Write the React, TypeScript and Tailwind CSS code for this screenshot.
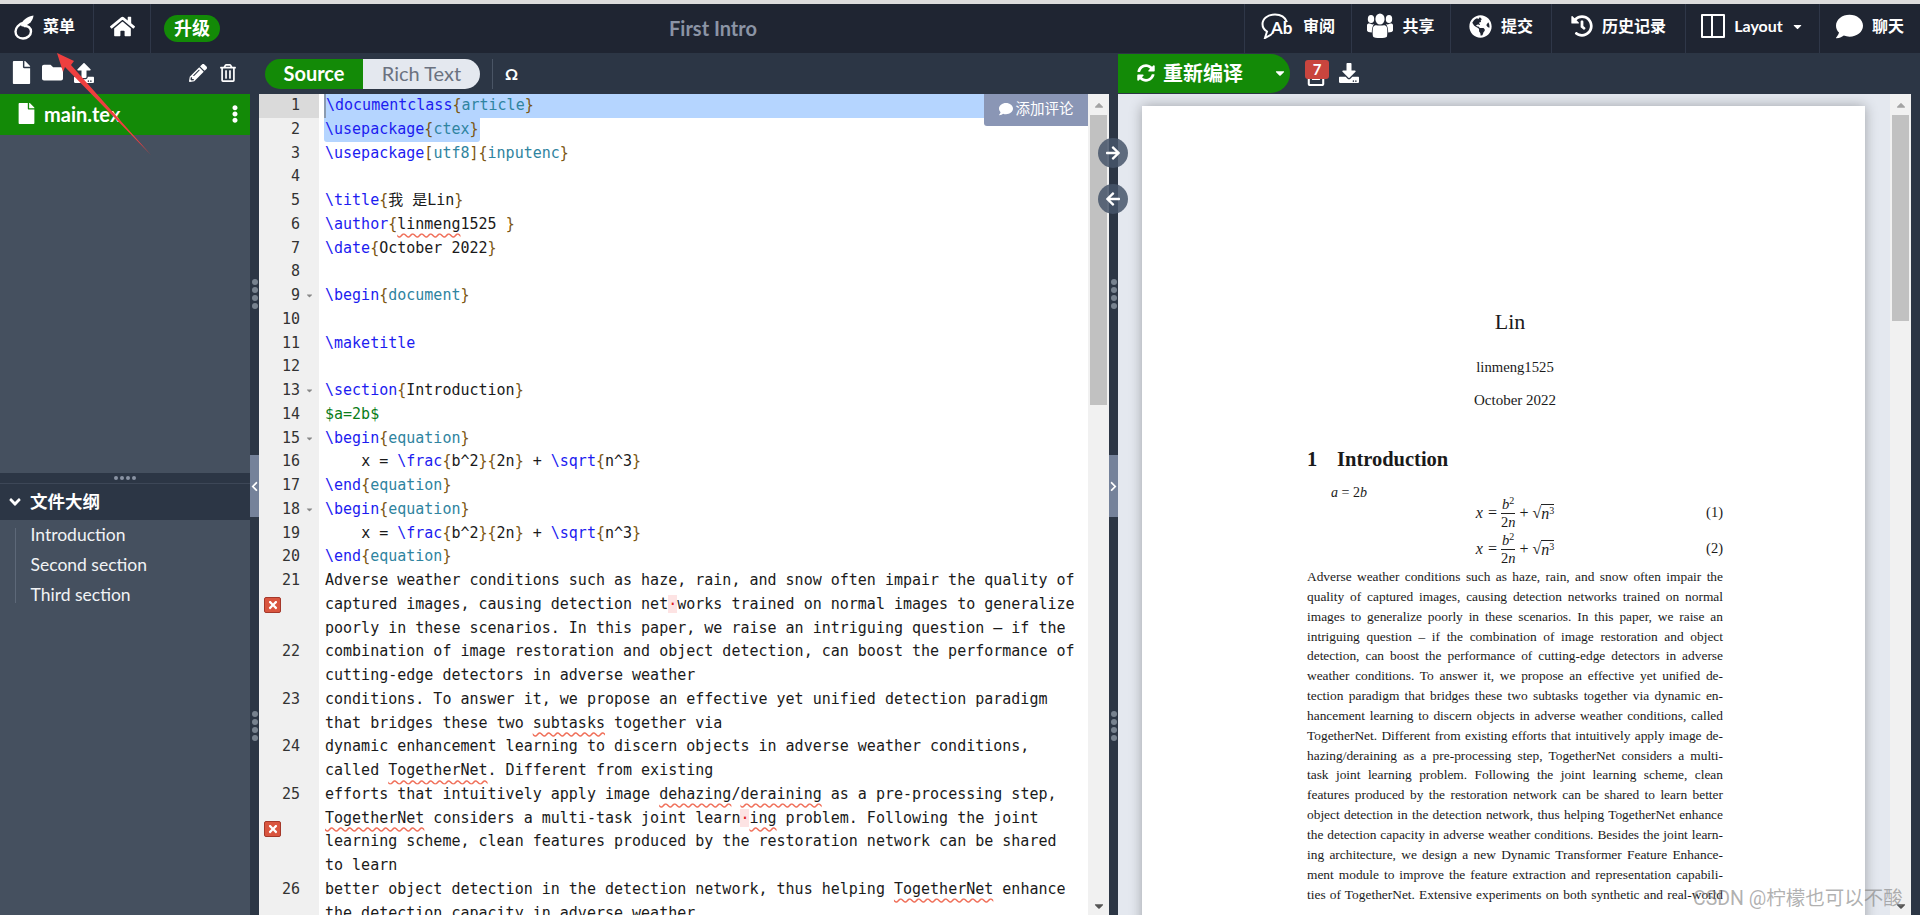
import React from "react";
import {
  FaFile,
  FaFolder,
  FaUpload,
  FaPencilAlt,
  FaRegTrashAlt,
  FaHome,
  FaEllipsisV,
  FaAngleDown,
  FaChevronLeft,
  FaChevronRight,
  FaGlobeAmericas,
  FaHistory,
  FaComment,
  FaCaretDown,
  FaCaretUp,
  FaSyncAlt,
  FaRegFileAlt,
  FaDownload,
  FaArrowRight,
  FaArrowLeft,
  FaTimes,
} from "react-icons/fa";

const Logo = () => (
  <svg width="20" height="25" viewBox="0 0 20 25" className="mb-[3px] text-white">
    <path d="M10.5 7.5C4.5 9 1.5 13 1.5 16.5c0 4.5 3.5 7 7.5 7s8-3 8-7c0-3.5-3-6-6.5-5.5" fill="none" stroke="currentColor" strokeWidth="2.4" strokeLinecap="round" />
    <path d="M7 11C8 5 13 1.5 19.5 0.5 19 5 16 10 8.5 11.5Z" fill="currentColor" />
  </svg>
);

const ReviewIcon = () => (
  <svg width="33" height="26" viewBox="0 0 33 26" className="text-white">
    <path d="M26 9C24 4 20 1.5 14 1.5 7 1.5 1.5 5.5 1.5 11c0 3.500 2 6 4.500 7.500L4 25l7-4" fill="none" stroke="currentColor" strokeWidth="2" />
    <text x="10" y="21" fontSize="17" fontWeight="700" fill="currentColor" fontFamily="Lato">Ab</text>
  </svg>
);

const UsersIcon = () => (
  <svg width="26" height="26" viewBox="0 0 26 26" fill="white">
    <ellipse cx="13" cy="6" rx="4.600" ry="5.500" />
    <ellipse cx="4" cy="6" rx="3.200" ry="4" />
    <ellipse cx="22" cy="6" rx="3.200" ry="4" />
    <path d="M6.500 13.500C8 11.500 10 12.500 13 12.500s5-1 6.500 1c1 1.500 1 7 .5 10-1 2-13 2-14 0-.5-3-.5-8.500.5-10Z" />
    <path d="M0 12.500C0 10.500 2 10 4 11c1 .5 2 .5 3 0-1.500 2-2.200 5-2.200 8.500-2.500 0-4.800-1-4.800-2Z" />
    <path d="M26 12.500C26 10.500 24 10 22 11c-1 .5-2 .5-3 0 1.500 2 2.200 5 2.200 8.500 2.500 0 4.800-1 4.800-2Z" />
  </svg>
);

const LayoutIcon = () => (
  <div className="flex h-[24px] w-[24px] rounded-[1px] border-2 border-white">
    <div className="w-1/2 border-r-2 border-white" />
  </div>
);

const NavItem = ({ width, icon, label }: { width: string; icon: React.ReactNode; label: React.ReactNode }) => (
  <div className={`flex h-full items-center justify-center gap-[9px] border-l border-[#2f3748] pb-[5px] text-[16px] font-bold text-white ${width}`}>
    {icon}
    {label}
  </div>
);

const TopBar = () => (
  <div className="flex h-[49px] shrink-0 items-center bg-[#1f2532]">
    <div className="flex h-full w-[93px] items-center gap-[9px] pl-[14px] text-[16px] font-bold text-white">
      <Logo />
      <span className="mb-[6px]">菜单</span>
    </div>
    <div className="flex h-full w-[58px] items-center justify-center border-l border-r border-[#2f3748] pb-[5px] text-white">
      <FaHome size={25} />
    </div>
    <div className="ml-[13px] flex h-[27px] w-[56px] items-center justify-center rounded-full bg-[#138a07] text-[18px] font-bold text-white">
      升级
    </div>
    <div className="flex-1 pb-[2px] pr-[38px] text-center text-[20px] font-bold text-[#8b94a5]">First Intro</div>
    <NavItem width="w-[107px]" icon={<ReviewIcon />} label="审阅" />
    <NavItem width="w-[99px]" icon={<UsersIcon />} label="共享" />
    <NavItem width="w-[101px]" icon={<FaGlobeAmericas size={23} />} label="提交" />
    <NavItem width="w-[134px]" icon={<FaHistory size={22} />} label="历史记录" />
    <NavItem
      width="w-[134px]"
      icon={<LayoutIcon />}
      label={
        <span className="flex items-center gap-[8px]">
          Layout
          <FaCaretDown size={13} />
        </span>
      }
    />
    <NavItem width="w-[101px]" icon={<FaComment size={27} />} label="聊天" />
  </div>
);

const Sidebar = () => (
  <div className="flex w-[250px] shrink-0 flex-col bg-[#45505f]">
    <div className="flex h-[41px] shrink-0 items-center bg-[#2c3645] pb-[2px] pl-[10px] text-white">
      <FaFile size={23} />
      <FaFolder size={21} className="ml-[9px]" />
      <FaUpload size={20} className="ml-[11px]" />
      <FaPencilAlt size={18} className="ml-[95px]" />
      <FaRegTrashAlt size={18} className="ml-[12px]" />
    </div>
    <div className="flex h-[41px] shrink-0 items-center bg-[#138a07] pb-[2px] pl-[16px] text-[20px] font-bold text-white">
      <FaFile size={21} />
      <span className="ml-[7px] flex-1">main.tex</span>
      <FaEllipsisV size={18} className="mr-[6px]" />
    </div>
    <div className="h-[338px] shrink-0" />
    <div className="flex h-[10px] shrink-0 items-center justify-center gap-[2px] bg-[#2c3645]">
      {[0, 1, 2, 3].map((i) => (
        <div key={i} className="h-[4px] w-[4px] rounded-full bg-[#8a93a3]" />
      ))}
    </div>
    <div className="flex h-[37px] shrink-0 items-center border-t border-[#3d4757] bg-[#2c3645] pl-[6px] text-[17.500px] font-bold text-white">
      <FaAngleDown size={18} />
      <span className="ml-[6px]">文件大纲</span>
    </div>
    <div className="flex pl-[15px]">
      <div className="mt-[8px] h-[75px] w-px bg-[#5d6878]" />
      <div className="pl-[14.500px] text-[17.500px] leading-[30px] text-[#f1f3f5]">
        <div>Introduction</div>
        <div>Second section</div>
        <div>Third section</div>
      </div>
    </div>
  </div>
);

const Dots = () => (
  <div className="flex flex-col items-center gap-[2px]">
    {[0, 1, 2, 3].map((i) => (
      <div key={i} className="h-[6px] w-[6px] rounded-full bg-[#77828f]" />
    ))}
  </div>
);

const Gutter = ({ right }: { right?: boolean }) => (
  <div className="flex w-[9px] shrink-0 flex-col bg-[#2c3645]">
    <div className="mt-[185px]">
      <Dots />
    </div>
    <div className="mt-[146px] flex h-[62px] items-center justify-center bg-[#75829a] text-white">
      {right ? <FaChevronRight size={11} /> : <FaChevronLeft size={11} />}
    </div>
    <div className="mt-[194px]">
      <Dots />
    </div>
  </div>
);

const EditorToolbar = () => (
  <div className="flex h-[41px] shrink-0 items-center bg-[#2c3645] pl-[15px]">
    <div className="flex h-[30px] w-[98px] items-center justify-center rounded-l-full bg-[#138a07] pb-[2px] text-[20px] font-bold text-white">
      Source
    </div>
    <div className="flex h-[30px] w-[117px] items-center justify-center rounded-r-full bg-[#e4e8ef] pb-[2px] text-[20px] text-[#6b7280]">
      Rich Text
    </div>
    <div className="ml-[12px] h-[30px] border-l border-[#4a5565]" />
    <div className="ml-[12px] text-[16px] font-bold text-white">Ω</div>
  </div>
);

const C = ({ children }: { children: React.ReactNode }) => <span className="text-[#1c1cf0]">{children}</span>;
const A = ({ children }: { children: React.ReactNode }) => <span className="text-[#2f84a0]">{children}</span>;
const B = ({ children }: { children: React.ReactNode }) => <span className="text-[#7a5510]">{children}</span>;
const Sp = ({ children }: { children: React.ReactNode }) => (
  <span className="underline decoration-[#f0705a] decoration-wavy underline-offset-[4px]">{children}</span>
);
const Bad = () => <span className="bg-[#fde3e3] text-[#e02020]">·</span>;

const Cmd = ({ c, a }: { c: string; a: string }) => (
  <>
    <C>\{c}</C>
    <B>{"{"}</B>
    <A>{a}</A>
    <B>{"}"}</B>
  </>
);

const Frac = () => (
  <>
    {"    x = "}
    <C>\frac</C>
    <B>{"{"}</B>b^2<B>{"}{"}</B>2n<B>{"}"}</B> + <C>\sqrt</C>
    <B>{"{"}</B>n^3<B>{"}"}</B>
  </>
);

type Line = { code?: React.ReactNode; fold?: boolean; error?: number };

const lines: Line[] = [
  {},
  {},
  {
    code: (
      <>
        <C>\usepackage</C>
        <B>[</B>
        <A>utf8</A>
        <B>]{"{"}</B>
        <A>inputenc</A>
        <B>{"}"}</B>
      </>
    ),
  },
  {},
  {
    code: (
      <>
        <C>\title</C>
        <B>{"{"}</B>我 是Lin<B>{"}"}</B>
      </>
    ),
  },
  {
    code: (
      <>
        <C>\author</C>
        <B>{"{"}</B>
        <Sp>linmeng</Sp>1525 <B>{"}"}</B>
      </>
    ),
  },
  {
    code: (
      <>
        <C>\date</C>
        <B>{"{"}</B>October 2022<B>{"}"}</B>
      </>
    ),
  },
  {},
  { code: <Cmd c="begin" a="document" />, fold: true },
  {},
  { code: <C>\maketitle</C> },
  {},
  {
    code: (
      <>
        <C>\section</C>
        <B>{"{"}</B>Introduction<B>{"}"}</B>
      </>
    ),
    fold: true,
  },
  { code: <span className="text-[#0b7d1a]">$a=2b$</span> },
  { code: <Cmd c="begin" a="equation" />, fold: true },
  { code: <Frac /> },
  { code: <Cmd c="end" a="equation" /> },
  { code: <Cmd c="begin" a="equation" />, fold: true },
  { code: <Frac /> },
  { code: <Cmd c="end" a="equation" /> },
  {
    error: 1,
    code: (
      <>
        Adverse weather conditions such as haze, rain, and snow often impair the quality of captured images, causing
        detection net
        <Bad />
        works trained on normal images to generalize poorly in these scenarios. In this paper, we raise an intriguing
        question – if the
      </>
    ),
  },
  { code: "combination of image restoration and object detection, can boost the performance of cutting-edge detectors in adverse weather" },
  {
    code: (
      <>
        conditions. To answer it, we propose an effective yet unified detection paradigm that bridges these two <Sp>subtasks</Sp> together via
      </>
    ),
  },
  {
    code: (
      <>
        dynamic enhancement learning to discern objects in adverse weather conditions, called <Sp>TogetherNet</Sp>. Different from existing
      </>
    ),
  },
  {
    error: 2,
    code: (
      <>
        efforts that intuitively apply image <Sp>dehazing</Sp>/<Sp>deraining</Sp> as a pre-processing step, <Sp>TogetherNet</Sp> considers a multi-task joint learn
        <Bad />
        <Sp>ing</Sp> problem. Following the joint learning scheme, clean features produced by the restoration network can be shared to learn
      </>
    ),
  },
  {
    code: (
      <>
        better object detection in the detection network, thus helping <Sp>TogetherNet</Sp> enhance the detection capacity in adverse weather
      </>
    ),
  },
];

const ErrorMark = ({ top }: { top: string }) => (
  <div className={`absolute left-[5px] flex h-[16px] w-[17px] items-center justify-center rounded-[2px] border border-[#a5382a] bg-[#d9553f] text-white ${top}`}>
    <FaTimes size={12} />
  </div>
);

const Row = ({ n, active, fold, error, children }: { n: number; active?: boolean; fold?: boolean; error?: number; children: React.ReactNode }) => (
  <div className="flex">
    <div className={`relative flex w-[60px] shrink-0 ${active ? "bg-[#dadada]" : "bg-[#f0f0f0]"}`}>
      <div className="h-[23.75px] w-[41px] text-right text-[#333]">{n}</div>
      {fold && (
        <div className="flex h-[23.75px] flex-1 items-center justify-center text-[#888]">
          <FaCaretDown size={9} />
        </div>
      )}
      {error === 1 && <ErrorMark top="top-[28px]" />}
      {error === 2 && <ErrorMark top="top-[38px]" />}
    </div>
    <div className="min-w-0 flex-1 whitespace-pre-wrap pl-[6px] pr-[8px] text-[#1a1a1a]">{children}</div>
  </div>
);

const Editor = () => (
  <div className="relative flex min-w-0 flex-1 bg-white">
    <div className="min-w-0 flex-1 overflow-hidden font-['DejaVu_Sans_Mono','Noto_Sans_CJK_SC',monospace] text-[15px] leading-[23.75px]">
      <Row n={1} active>
        <div className="-ml-[1px] -mr-[8px] h-[23.75px] border-l-2 border-[#8b9bb0] bg-[#b5d5ff]">
          <Cmd c="documentclass" a="article" />
        </div>
      </Row>
      <Row n={2}>
        <span className="-ml-[1px] inline-block h-[23.75px] rounded-b-[3px] bg-[#b5d5ff] pr-[1px] pl-[1px]">
          <Cmd c="usepackage" a="ctex" />
        </span>
      </Row>
      {lines.slice(2).map((line, i) => (
        <Row key={i} n={i + 3} fold={line.fold} error={line.error}>
          {line.code}
        </Row>
      ))}
    </div>
    <div className="flex w-[21px] shrink-0 flex-col justify-between bg-[#f1f1f1] pb-[2px]">
      <div>
        <div className="flex h-[21px] items-center justify-center text-[#a3a3a3]">
          <FaCaretUp size={14} />
        </div>
        <div className="ml-[2px] h-[290px] w-[17px] bg-[#c1c1c1]" />
      </div>
      <div className="flex h-[14px] items-center justify-center text-[#555]">
        <FaCaretDown size={14} />
      </div>
    </div>
    <div className="absolute right-[21px] top-0 flex h-[32px] w-[104px] items-center justify-center gap-[3px] rounded-bl-[3px] bg-[#8a96b5] pb-[2px] text-[14.500px] text-white">
      <FaComment size={14} />
      添加评论
    </div>
  </div>
);

const Fraction = () => (
  <span className="mx-[4px] inline-flex flex-col items-center text-[14.500px] leading-[17px]">
    <span className="border-b border-[#222] px-[1px]">
      <i>b</i>
      <sup className="text-[10px]">2</sup>
    </span>
    <span>
      2<i>n</i>
    </span>
  </span>
);

const Equation = ({ n }: { n: number }) => (
  <div className="relative flex h-[36px] items-center justify-center text-[16px]">
    <i>x</i>
    <span className="ml-[5px]">=</span>
    <Fraction />
    <span className="mr-[4px]">+</span>
    <span>√</span>
    <span className="border-t border-[#222] leading-[17px]">
      <i>n</i>
      <sup className="text-[10px]">3</sup>
    </span>
    <span className="absolute right-0 text-[14.500px]">({n})</span>
  </div>
);

const pdfLines = [
  "Adverse weather conditions such as haze, rain, and snow often impair the",
  "quality of captured images, causing detection networks trained on normal",
  "images to generalize poorly in these scenarios. In this paper, we raise an",
  "intriguing question – if the combination of image restoration and object",
  "detection, can boost the performance of cutting-edge detectors in adverse",
  "weather conditions. To answer it, we propose an effective yet unified de-",
  "tection paradigm that bridges these two subtasks together via dynamic en-",
  "hancement learning to discern objects in adverse weather conditions, called",
  "TogetherNet. Different from existing efforts that intuitively apply image de-",
  "hazing/deraining as a pre-processing step, TogetherNet considers a multi-",
  "task joint learning problem. Following the joint learning scheme, clean",
  "features produced by the restoration network can be shared to learn better",
  "object detection in the detection network, thus helping TogetherNet enhance",
  "the detection capacity in adverse weather conditions. Besides the joint learn-",
  "ing architecture, we design a new Dynamic Transformer Feature Enhance-",
  "ment module to improve the feature extraction and representation capabili-",
  "ties of TogetherNet. Extensive experiments on both synthetic and real-world",
];

const PdfPage = () => (
  <div className="ml-[24px] mt-[12px] h-[900px] w-[723px] bg-white pl-[165px] pr-[142px] pt-[202px] font-['Liberation_Serif',serif] text-[#1a1a1a] shadow-[0_0_12px_rgba(0,0,0,0.3)]">
    <div className="pr-[10px] text-center text-[22px] leading-[28px]">Lin</div>
    <div className="mt-[21px] text-center text-[14.700px] leading-[20px]">linmeng1525</div>
    <div className="mt-[13px] text-center text-[15px] leading-[20px]">October 2022</div>
    <div className="mt-[37px] flex text-[20.500px] font-bold leading-[24px]">
      <span className="w-[30px]">1</span>
      <span>Introduction</span>
    </div>
    <div className="ml-[24px] mt-[12px] text-[14px] leading-[20px]">
      <i>a</i> = 2<i>b</i>
    </div>
    <div className="-mt-[8px]">
      <Equation n={1} />
      <Equation n={2} />
    </div>
    <div className="text-[13.400px] leading-[19.850px]">
      {pdfLines.map((l) => (
        <div key={l} className="h-[19.850px] whitespace-nowrap [text-align-last:justify]">
          {l}
        </div>
      ))}
    </div>
  </div>
);

const Preview = () => (
  <div className="flex w-[802px] shrink-0 flex-col">
    <div className="flex h-[41px] shrink-0 items-center bg-[#2c3645] text-white">
      <div className="flex h-[39px] w-[172px] items-center rounded-r-[20px] bg-[#138a07] pb-[2px] pl-[19px] text-[20px] font-bold">
        <FaSyncAlt size={18} />
        <span className="ml-[8px]">重新编译</span>
        <FaCaretDown size={14} className="ml-[30px]" />
      </div>
      <div className="relative ml-[15px] mb-[2px] h-[26px] w-[24px]">
        <FaRegFileAlt size={22} className="absolute bottom-0 left-0" />
        <div className="absolute left-0 top-0 flex h-[19px] w-[24px] items-center justify-center rounded-[3px] bg-[#c9453e] text-[15px] font-bold">
          7
        </div>
      </div>
      <FaDownload size={20} className="mb-[2px] ml-[10px]" />
    </div>
    <div className="flex min-h-0 flex-1">
      <div className="min-w-0 flex-1 overflow-hidden bg-[#e4e8ef]">
        <PdfPage />
      </div>
      <div className="flex w-[21px] shrink-0 flex-col justify-between bg-[#f1f1f1] pb-[2px]">
        <div>
          <div className="flex h-[21px] items-center justify-center text-[#a3a3a3]">
            <FaCaretUp size={14} />
          </div>
          <div className="ml-[2px] h-[206px] w-[17px] bg-[#c1c1c1]" />
        </div>
        <div className="flex h-[14px] items-center justify-center text-[#555]">
          <FaCaretDown size={14} />
        </div>
      </div>
      <div className="w-[9px] shrink-0 bg-[#2c3645]" />
    </div>
  </div>
);

export default function App() {
  return (
    <div className="relative flex h-screen flex-col overflow-hidden bg-[#2c3645] pt-[4px] font-['Lato','Noto_Sans_CJK_SC',sans-serif]">
      <div className="absolute left-0 right-0 top-0 h-[4px] bg-[#dcdcdc]" />
      <TopBar />
      <div className="flex min-h-0 flex-1">
        <Sidebar />
        <div className="flex w-[868px] shrink-0 flex-col">
          <EditorToolbar />
          <div className="flex min-h-0 flex-1">
            <Gutter />
            <Editor />
            <Gutter right />
          </div>
        </div>
        <Preview />
      </div>

      {/* swap buttons sit over the gutter */}
      <div className="absolute left-[1098px] top-[138px] flex h-[30px] w-[30px] items-center justify-center rounded-full bg-[#46556a]/85 text-white">
        <FaArrowRight size={16} />
      </div>
      <div className="absolute left-[1098px] top-[184px] flex h-[30px] w-[30px] items-center justify-center rounded-full bg-[#46556a]/85 text-white">
        <FaArrowLeft size={16} />
      </div>

      {/* annotation drawn on top of the screenshot */}
      <svg className="pointer-events-none absolute left-0 top-0" width="160" height="160" viewBox="0 0 160 160">
        <polygon points="57,53 74,61 71,65 151,155 65,67 63,72" fill="#ee3f3f" />
      </svg>
      <div className="pointer-events-none absolute left-[1693px] top-[884px] whitespace-nowrap font-['Roboto','Noto_Sans_CJK_SC',sans-serif] text-[19.500px] text-[#7d7d7d]/60">
        CSDN @柠檬也可以不酸
      </div>
    </div>
  );
}
